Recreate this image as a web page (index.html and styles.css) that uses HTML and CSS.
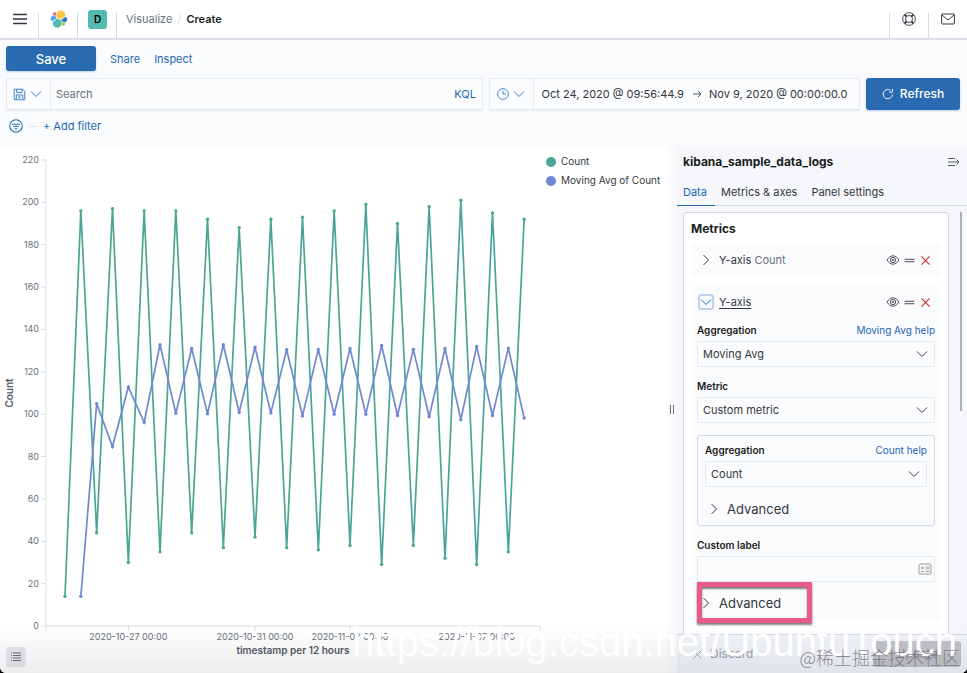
FILE: index.html
```html
<!DOCTYPE html>
<html lang="en">
<head>
  <meta charset="UTF-8">
  <meta name="viewport" content="width=device-width, initial-scale=1.0">
  <title>Create - Visualize</title>
  <link rel="stylesheet" href="styles.css">
</head>
<body>

<svg class="symbols" width="0" height="0">
  <symbol id="down" viewBox="0 0 16 16"><path d="M3 5.500l5 5 5-5"/></symbol>
  <symbol id="right" viewBox="0 0 16 16"><path d="M5.500 3l5 5-5 5"/></symbol>
  <symbol id="eye" viewBox="0 0 16 16"><path d="M1.200 8C3 5 5.500 3.200 8 3.200S13 5 14.800 8C13 11 10.500 12.800 8 12.800S3 11 1.200 8z"/><circle cx="8" cy="8" r="3"/><circle cx="8" cy="8" r=".8"/></symbol>
  <symbol id="grab" viewBox="0 0 16 16"><path d="M2 6.500h12M2 9.500h12"/></symbol>
  <symbol id="cross" viewBox="0 0 16 16"><path d="M3 3l10 10M13 3L3 13"/></symbol>
</svg>

<div class="app">
  <header class="header">
    <button class="header-item" aria-label="Menu">
      <svg width="14" height="12" viewBox="0 0 14 12"><path d="M0 1.500h14M0 6h14M0 10.500h14" stroke="#343741" stroke-width="1.600"/></svg>
    </button>
    <a class="header-item" href="#" aria-label="Elastic">
      <svg width="18" height="18" viewBox="0 0 32 32">
        <path fill="#F9C440" d="M12.600 13.800l7 3.200 7.100-6.200a7.900 7.900 0 0 0-14.400-6.100L11 10.700z"/>
        <path fill="#54B9B0" d="M5.400 21.200a7.900 7.900 0 0 0 14.500 6l1.100-6.100-1.500-3-7.100-3.200z"/>
        <path fill="#E0569B" d="M5.300 9.200l4.800 1.100L11.200 4.800A3.800 3.800 0 0 0 5.300 9.200z"/>
        <path fill="#4BA3E8" d="M4.900 10.300a5.300 5.300 0 0 0-.2 9.900l6.800-6.100-1.200-2.600z"/>
        <path fill="#97C93D" d="M20.900 27.200a3.800 3.800 0 0 0 5.900-4.400L22 21.700z"/>
        <path fill="#2C77C9" d="M21.800 20.500l5.300 1.200a5.300 5.300 0 0 0 .2-9.900l-6.900 6.100z"/>
      </svg>
    </a>
    <button class="header-item"><span class="space">D</span></button>
    <nav class="breadcrumbs">
      <a href="#">Visualize</a><span class="slash">/</span><strong>Create</strong>
    </nav>
    <button class="header-item right" aria-label="Help">
      <svg width="14" height="14" viewBox="0 0 16 16" fill="none" stroke="#343741"><circle cx="8" cy="8" r="7.300"/><circle cx="8" cy="8" r="4"/><path stroke-width="2.200" d="M3 3l2.200 2.200M13 3l-2.200 2.200M3 13l2.200-2.200M13 13l-2.200-2.200"/></svg>
    </button>
    <button class="header-item right" aria-label="Newsfeed">
      <svg width="14" height="12" viewBox="0 0 14 12" fill="none" stroke="#343741"><rect x=".6" y="1" width="12.800" height="10" rx="1"/><path d="M1 2l6 5 6-5"/></svg>
    </button>
  </header>

  <div class="top-menu">
    <button class="primary save">Save</button>
    <a href="#">Share</a>
    <a href="#">Inspect</a>
  </div>

  <div class="query-row">
    <div class="box query">
      <button class="addon" aria-label="Saved queries">
        <svg width="13" height="13" viewBox="0 0 16 16"><path d="M1.500 1.500h10.500l2.500 2.500v10.500h-13zM4.500 1.500v4h6.500v-4M4 14.500V8.500h8v6"/><circle cx="8" cy="11.500" r="1"/></svg>
        <svg class="icon chevron"><use href="#down"/></svg>
      </button>
      <input type="text" placeholder="Search" aria-label="Search">
      <button class="kql">KQL</button>
    </div>
    <div class="box dates">
      <button class="addon" aria-label="Quick select">
        <svg width="12" height="12" viewBox="0 0 16 16"><circle cx="8" cy="8" r="7.200"/><path d="M8 3.500V8h4"/></svg>
        <svg class="icon chevron"><use href="#down"/></svg>
      </button>
      <button class="date">Oct 24, 2020 @ 09:56:44.9</button>
      <svg class="arrow" width="10" height="10" viewBox="0 0 10 10"><path d="M1 5h8M6 2l3 3-3 3"/></svg>
      <button class="date">Nov 9, 2020 @ 00:00:00.0</button>
    </div>
    <button class="primary refresh">
      <svg width="12" height="12" viewBox="0 0 16 16"><path d="M14 8.500A6.200 6.200 0 1 1 11.500 3.200M14 1v4.500H9.500"/></svg>
      Refresh
    </button>
  </div>

  <div class="filter-row">
    <button aria-label="Filter options">
      <svg width="14" height="14" viewBox="0 0 16 16"><circle cx="8" cy="8" r="7.200"/><path d="M3.500 6h9M5 8.500h6M7 11h2"/></svg>
    </button>
    <span class="dash"></span>
    <button>+ Add filter</button>
  </div>

  <main class="main">
    <section class="vis">
      <svg id="chart" role="img" aria-label="Count and moving average of count"></svg>
      <ul class="legend">
        <li><i class="dot count"></i>Count</li>
        <li><i class="dot avg"></i>Moving Avg of Count</li>
      </ul>
      <button class="legend-toggle" aria-label="Toggle legend">
        <svg width="12" height="12" viewBox="0 0 12 12"><path d="M3 2h8M3 4.500h8M3 7h8M3 9.500h8M1 2h1M1 4.500h1M1 7h1M1 9.500h1"/></svg>
      </button>
    </section>

    <div class="resizer"></div>

    <aside class="sidebar">
      <div class="sidebar-title">
        <h2>kibana_sample_data_logs</h2>
        <button aria-label="Collapse">
          <svg width="12" height="10" viewBox="0 0 12 10"><path d="M0 1.500h7M0 5h11M0 8.500h7M8.500 2.500L11 5 8.500 7.500"/></svg>
        </button>
      </div>
      <nav class="tabs">
        <button class="active">Data</button>
        <button>Metrics &amp; axes</button>
        <button>Panel settings</button>
      </nav>

      <div class="scroll">
        <div class="panel">
          <h3>Metrics</h3>
          <div class="agg">
            <div class="agg-head">
              <button class="toggle" aria-label="Open"><svg class="icon chevron"><use href="#right"/></svg></button>
              <span class="agg-name">Y-axis <span>Count</span></span>
              <button aria-label="Hide"><svg class="icon eye"><use href="#eye"/></svg></button>
              <button aria-label="Move"><svg class="icon"><use href="#grab"/></svg></button>
              <button aria-label="Remove"><svg class="icon red"><use href="#cross"/></svg></button>
            </div>
          </div>
          <div class="agg">
            <div class="agg-head">
              <button class="toggle focused" aria-label="Close"><svg class="icon chevron"><use href="#down"/></svg></button>
              <span class="agg-name open">Y-axis</span>
              <button aria-label="Hide"><svg class="icon eye"><use href="#eye"/></svg></button>
              <button aria-label="Move"><svg class="icon"><use href="#grab"/></svg></button>
              <button aria-label="Remove"><svg class="icon red"><use href="#cross"/></svg></button>
            </div>
            <div class="agg-body">
              <div class="field">
                <div class="label-row"><label for="agg">Aggregation</label><a href="#">Moving Avg help</a></div>
                <div class="select"><select id="agg"><option>Moving Avg</option></select><svg class="icon chevron"><use href="#down"/></svg></div>
              </div>
              <div class="field">
                <div class="label-row"><label for="metric">Metric</label></div>
                <div class="select"><select id="metric"><option>Custom metric</option></select><svg class="icon chevron"><use href="#down"/></svg></div>
              </div>
              <div class="group">
                <div class="label-row"><label for="sub-agg">Aggregation</label><a href="#">Count help</a></div>
                <div class="select"><select id="sub-agg"><option>Count</option></select><svg class="icon chevron"><use href="#down"/></svg></div>
                <button class="advanced"><svg class="icon chevron"><use href="#right"/></svg>Advanced</button>
              </div>
              <div class="field last">
                <div class="label-row"><label for="custom-label">Custom label</label></div>
                <div class="select">
                  <input type="text" id="custom-label">
                  <svg class="card-icon" width="14" height="12" viewBox="0 0 14 12"><rect x="1" y="1" width="12" height="10" rx="1"/><path d="M7.500 4h4M7.500 6h4M7.500 8.500h4M3 8.500h3"/><circle cx="4.500" cy="5" r="1"/></svg>
                </div>
              </div>
              <div class="marked">
                <button class="advanced"><svg class="icon chevron"><use href="#right"/></svg>Advanced</button>
              </div>
            </div>
          </div>
          <button class="add">+ Add</button>
        </div>
      </div>

      <div class="actions">
        <button class="discard"><svg class="icon"><use href="#cross"/></svg>Discard</button>
        <button class="update">Update</button>
      </div>
    </aside>
  </main>

  <div class="shade"></div>
  <div class="watermark">https://blog.csdn.net/UbuntuTouch</div>
  <div class="watermark-cn">@稀土掘金技术社区</div>
</div>

<script>
  const count = [14, 196, 44, 197, 30, 196, 35, 196, 44, 192, 37, 188, 42, 192, 37,
    193, 36, 196, 38, 199, 29, 190, 38, 198, 32, 201, 29, 195, 35, 192];
  const avg = [null, 14, 105, 84.7, 112.8, 96.2, 132.8, 100.4, 131, 100.2, 132.8, 100.8, 131.6, 100.6, 130.4,
    99.2, 130.6, 100, 131, 100, 132.4, 99.4, 130.6, 98.8, 131, 97.4, 132, 99.4, 131.2, 98.2];
  const dates = { 4: '2020-10-27 00:00', 12: '2020-10-31 00:00', 18: '2020-11-03 00:00', 26: '2020-11-07 00:00' };

  const svg = document.getElementById('chart');

  function draw() {
    const { width, height } = svg.getBoundingClientRect();
    const left = 46, right = width - 6, top = 14, bottom = height - 47;
    const step = (right - left) / 31.2;
    const x = i => left + (i + 1.2) * step;
    const y = v => bottom - v / 220 * (bottom - top);
    let out = `<path class="axis" d="M${left} ${top}V${bottom + 5}M${left} ${bottom}H${right}v5"/>`;

    for (let v = 0; v <= 220; v += 20) {
      out += `<path class="axis" d="M${left - 5} ${y(v)}h5"/>`;
      out += `<text x="${left - 7}" y="${y(v) + 3}" text-anchor="end">${v}</text>`;
    }
    for (const i in dates) {
      out += `<path class="axis" d="M${x(+i)} ${bottom}v5"/>`;
      out += `<text x="${x(+i)}" y="${bottom + 14}" text-anchor="middle">${dates[i]}</text>`;
    }
    out += `<text class="title" x="${(left + right) / 2}" y="${bottom + 28}" text-anchor="middle">timestamp per 12 hours</text>`;
    out += `<text class="title" transform="translate(13 ${(top + bottom) / 2}) rotate(-90)" text-anchor="middle">Count</text>`;

    [['count', count], ['avg', avg]].forEach(([name, data]) => {
      const points = data.map((v, i) => [x(i), v]).filter(p => p[1] !== null).map(p => [p[0], y(p[1])]);
      out += `<polyline class="line ${name}" points="${points.join(' ')}"/>`;
      points.forEach(p => { out += `<circle class="point ${name}" cx="${p[0]}" cy="${p[1]}" r="1.7"/>`; });
    });
    svg.innerHTML = out;
  }

  draw();
  window.addEventListener('resize', draw);
</script>

</body>
</html>
```
FILE: styles.css
```css
*, *::before, *::after {
  box-sizing: border-box;
}

body {
  margin: 0;
  background: #000;
  font-family: Inter, "Noto Sans CJK SC", sans-serif;
  font-size: 11px;
  line-height: 18px;
  color: #343741;
}

button, input, select {
  font: inherit;
  color: inherit;
  background: none;
  border: 0;
  padding: 0;
  margin: 0;
}

button {
  cursor: pointer;
}

a {
  color: #2268b0;
  text-decoration: none;
}

h2, h3 {
  margin: 0;
  font-size: 12px;
  font-weight: 700;
  color: #1a1c21;
}

svg {
  display: block;
  flex: none;
}

.symbols {
  position: absolute;
}

.icon {
  width: 13px;
  height: 13px;
  fill: none;
  stroke: currentColor;
  stroke-width: 1.1;
}

.icon.chevron {
  width: 16px;
  height: 16px;
  stroke-width: 1;
}

.app {
  position: relative;
  display: flex;
  flex-direction: column;
  height: 100vh;
  overflow: hidden;
  background: #fafbfd;
  border-radius: 0 0 6px 6px;
}

/* header */
.header {
  display: flex;
  height: 40px;
  flex: none;
  background: #fff;
  border-bottom: 2px solid #dce0ea;
}

.header-item {
  width: 39px;
  display: flex;
  align-items: center;
  justify-content: center;
  background: linear-gradient(#d3dae6, #d3dae6) right bottom / 1px 25px no-repeat;
}

.header-item.right {
  background-position: left bottom;
}

.space {
  width: 19px;
  height: 19px;
  border-radius: 3px;
  background: #54b9b0;
  color: #000;
  font-size: 10px;
  font-weight: 600;
  line-height: 19px;
  text-align: center;
}

.breadcrumbs {
  flex: 1;
  display: flex;
  align-items: center;
  padding-left: 9px;
}

.breadcrumbs a {
  color: #69707d;
}

.breadcrumbs strong {
  font-weight: 600;
  color: #1a1c21;
}

.slash {
  margin: 0 5px;
  color: #d3dae6;
}

/* top menu and query bar */
.top-menu {
  display: flex;
  align-items: center;
  gap: 14px;
  padding: 6px 6px 7px;
}

.primary {
  background: #2a6ab0;
  color: #fff;
  border-radius: 3px;
  font-weight: 500;
  box-shadow: 0 1px 2px rgba(42, 106, 176, .3);
}

.save {
  width: 90px;
  height: 25px;
  font-size: 13px;
}

.query-row {
  display: flex;
  gap: 6px;
  padding: 0 7px 0 6px;
}

.box {
  display: flex;
  align-items: center;
  height: 32px;
  border: 1px solid #e6eaf2;
  background: #fbfcfd;
  box-shadow: 0 1px 1px rgba(152, 162, 179, .15);
}

.query {
  flex: 1;
}

.query input {
  flex: 1;
  min-width: 0;
  padding: 0 5px;
  outline: none;
}

.query input::placeholder {
  color: #69707d;
  opacity: 1;
}

.kql {
  padding: 0 6px;
  color: #2268b0;
}

.addon {
  display: flex;
  align-items: center;
  justify-content: center;
  gap: 2px;
  width: 44px;
  height: 30px;
  border-right: 1px solid #e6eaf2;
  color: #3a7fc4;
}

.addon svg, .filter-row svg {
  fill: none;
  stroke: currentColor;
  stroke-width: 1.2;
}

.dates {
  flex: 0 0 371px;
  padding-right: 4px;
}

.date {
  flex: 1 0 auto;
  white-space: nowrap;
}

.arrow {
  fill: none;
  stroke: #535966;
}

.refresh {
  display: flex;
  align-items: center;
  justify-content: center;
  gap: 6px;
  width: 94px;
  height: 32px;
  font-size: 12px;
}

.refresh svg {
  fill: none;
  stroke: #fff;
  stroke-width: 1.2;
}

.filter-row {
  display: flex;
  align-items: center;
  gap: 6px;
  height: 36px;
  padding: 0 9px 4px;
  color: #2268b0;
}

.dash {
  width: 8px;
  height: 1px;
  background: #e1e5ee;
}

/* chart */
.main {
  flex: 1;
  display: flex;
  min-height: 0;
}

.vis {
  position: relative;
  flex: 1;
  display: flex;
  min-width: 0;
  background: #fff;
}

#chart {
  flex: 1;
  min-width: 0;
  height: 100%;
}

#chart text {
  font-size: 9px;
  fill: #69707d;
}

#chart .title {
  font-size: 10px;
  font-weight: 600;
  fill: #535966;
}

#chart .axis {
  fill: none;
  stroke: #dcdcde;
}

.line {
  fill: none;
  stroke-width: 1.7;
}

.line.count {
  stroke: #4aa597;
}

.line.avg {
  stroke: #7088d4;
}

.point.count {
  fill: #4aa597;
}

.point.avg {
  fill: #7088d4;
}

.legend {
  width: 121px;
  margin: 0;
  padding: 6px 0 0;
  list-style: none;
  font-size: 10px;
  line-height: 19px;
  white-space: nowrap;
}

.legend li {
  display: flex;
  align-items: center;
  gap: 5px;
}

.dot {
  width: 10px;
  height: 10px;
  border-radius: 50%;
}

.dot.count {
  background: #4aa597;
}

.dot.avg {
  background: #7088d4;
}

.legend-toggle {
  position: absolute;
  left: 6px;
  bottom: 6px;
  width: 20px;
  height: 20px;
  display: flex;
  align-items: center;
  justify-content: center;
  border-radius: 3px;
  background: #e6e8ec;
}

.legend-toggle svg {
  stroke: #69707d;
}

.resizer {
  width: 10px;
  display: flex;
  align-items: center;
  justify-content: center;
}

.resizer::before {
  content: "";
  width: 4px;
  height: 9px;
  border: solid #69707d;
  border-width: 0 1px;
}

/* sidebar */
.sidebar {
  width: 290px;
  display: flex;
  flex-direction: column;
  background: #f5f7fa;
}

.sidebar-title {
  display: flex;
  align-items: center;
  justify-content: space-between;
  height: 32px;
  flex: none;
  padding: 0 7px 0 6px;
}

.sidebar-title svg {
  fill: none;
  stroke: #535966;
}

.tabs {
  display: flex;
  flex: none;
  height: 28px;
  border-bottom: 1px solid #d3dae6;
}

.tabs button {
  height: 28px;
  padding: 0 8px 0 6px;
}

.tabs .active {
  color: #2268b0;
  border-bottom: 1px solid #2268b0;
}

.scroll {
  position: relative;
  flex: 1;
  min-height: 0;
  overflow: hidden;
  padding: 6px 18px 0 6px;
}

.scroll::after {
  content: "";
  position: absolute;
  top: 6px;
  right: 5px;
  width: 2px;
  height: 199px;
  background: #a9afba;
}

.panel {
  padding: 6px 7px;
  background: #fff;
  border: 1px solid #d3dae6;
  border-radius: 3px;
  height: 480px;
}

.panel h3 {
  line-height: 20px;
  margin-bottom: 5px;
}

.agg {
  margin-bottom: 10px;
  background: #fafbfd;
  border-radius: 3px;
}

.agg-head {
  display: flex;
  align-items: center;
  gap: 3px;
  height: 32px;
  padding: 0 9px 0 7px;
}

.agg-name {
  flex: 1;
  padding-left: 2px;
}

.agg-name span {
  color: #69707d;
}

.agg-name.open {
  text-decoration: underline;
  text-underline-offset: 2px;
}

.toggle {
  width: 16px;
  height: 16px;
  display: flex;
  align-items: center;
  justify-content: center;
  border-radius: 3px;
}

.toggle.focused {
  color: #2268b0;
  border: 2px solid #bcd1ea;
}

.icon.eye {
  width: 14px;
  height: 14px;
  stroke-width: 1;
}

.icon.red {
  stroke: #c9352b;
  stroke-width: 1.4;
}

.agg-body {
  padding: 3px 6px 1px;
}

.field {
  margin-bottom: 10px;
}

.label-row {
  display: flex;
  justify-content: space-between;
  height: 20px;
  font-size: 10px;
}

.label-row label {
  font-weight: 600;
  color: #1a1c21;
}

.select {
  position: relative;
}

.select select, .select input {
  display: block;
  width: 100%;
  height: 26px;
  padding: 0 5px;
  appearance: none;
  background: #fbfcfd;
  border: 1px solid #e6eaf2;
}

.select svg {
  position: absolute;
  top: 5px;
  right: 5px;
}

.card-icon {
  fill: none;
  stroke: #98999c;
}

.select .card-icon {
  top: 7px;
  right: 3px;
}

.group {
  margin: 12px 0 10px;
  padding: 5px 7px 0;
  border: 1px solid #d3dae6;
  border-radius: 3px;
}

.advanced {
  display: flex;
  align-items: center;
  gap: 5px;
  height: 32px;
  padding-left: 1px;
  font-size: 13px;
}

.group .advanced {
  margin-top: 6px;
}

.field.last {
  margin-bottom: 5px;
}

.marked {
  position: relative;
}

.marked::after {
  content: "";
  position: absolute;
  left: 0;
  top: -5px;
  width: 115px;
  height: 41px;
  border: 5px solid #ea5a8c;
  box-shadow: 0 2px 2px rgba(0, 0, 0, .5), inset 0 2px 2px rgba(0, 0, 0, .5);
}

.add {
  display: block;
  margin: 0 auto;
  font-size: 10px;
  color: #2268b0;
}

.actions {
  display: flex;
  justify-content: space-between;
  align-items: center;
  flex: none;
  height: 39px;
  padding: 0 6px 0 14px;
  border-top: 1px solid #d3dae6;
  background: #f1f4f9;
  color: #98a2b3;
}

.discard {
  display: flex;
  align-items: center;
  gap: 6px;
  font-size: 12px;
}

.update {
  width: 88px;
  height: 26px;
  border-radius: 3px;
  background: #c2c4c9;
  color: #8c9099;
  font-size: 12px;
}

/* overlays */
.shade {
  position: absolute;
  left: 0;
  right: 0;
  bottom: 0;
  height: 50px;
  background: linear-gradient(transparent, rgba(0, 0, 0, .07));
  pointer-events: none;
}

.watermark {
  position: absolute;
  right: 10px;
  bottom: 8px;
  font-family: "Liberation Sans", sans-serif;
  font-size: 40px;
  line-height: 46px;
  color: #fff;
  white-space: nowrap;
  pointer-events: none;
}

.watermark-cn {
  position: absolute;
  right: 7px;
  bottom: 4px;
  font-family: "Noto Sans CJK SC", sans-serif;
  font-size: 18px;
  font-weight: 300;
  line-height: 24px;
  color: rgba(110, 110, 115, .8);
  white-space: nowrap;
  pointer-events: none;
}
```
